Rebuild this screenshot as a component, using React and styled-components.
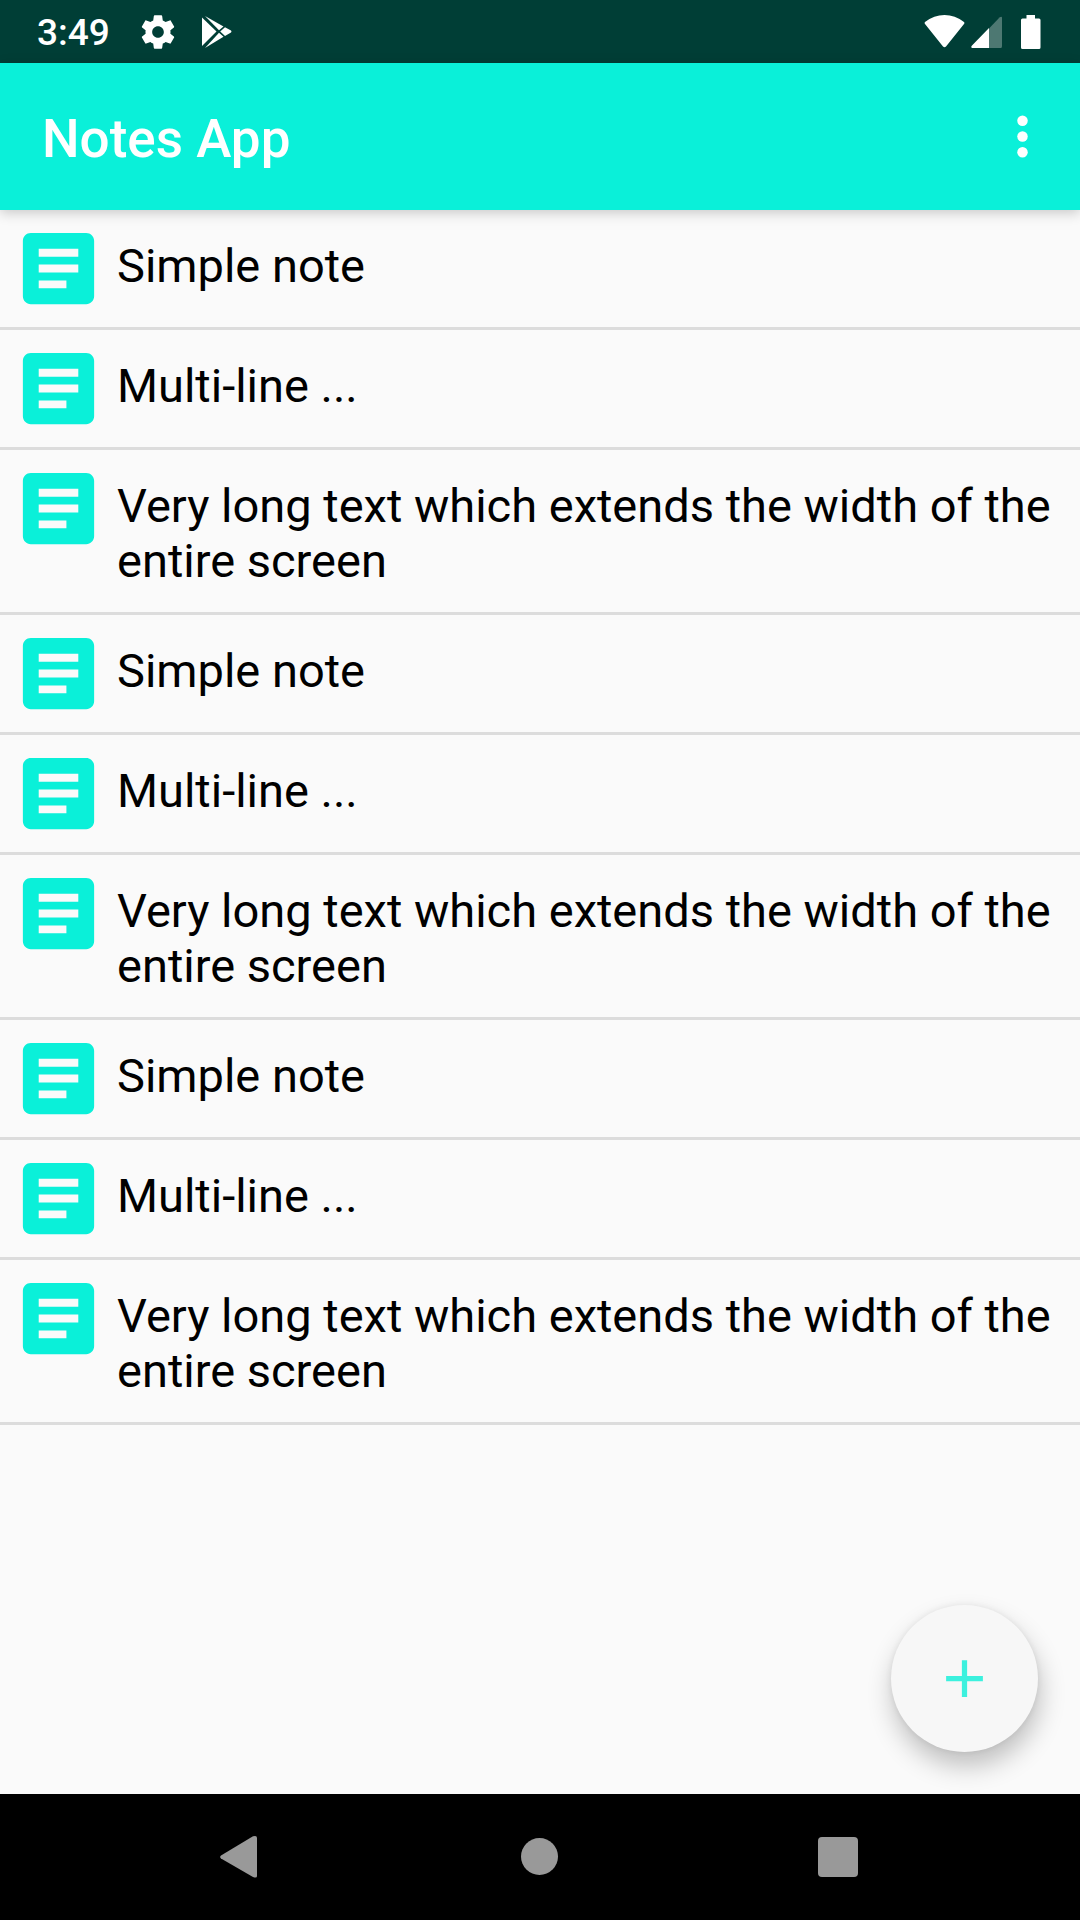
import React from "react";
import styled, { createGlobalStyle } from "styled-components";

const GlobalStyle = createGlobalStyle`
  * { box-sizing: border-box; }
  body {
    margin: 0;
    background: #fafafa;
    font-family: Roboto, "Liberation Sans", sans-serif;
  }
`;

const Screen = styled.div`
  display: flex;
  flex-direction: column;
  min-height: 100vh;
`;

const StatusBar = styled.header`
  display: flex;
  align-items: center;
  justify-content: space-between;
  height: 63px;
  padding: 0 39px 0 37px;
  background: #003e36;
  color: #fff;
`;

const StatusGroup = styled.div`
  display: flex;
  align-items: center;
  gap: ${(p) => p.$gap}px;

  svg { display: block; }
`;

const Clock = styled.time`
  margin-right: 4px;
  padding-top: 2px;
  font-size: 37px;
  font-weight: 500;
  line-height: 43px;
`;

const AppBar = styled.div`
  position: relative;
  display: flex;
  align-items: center;
  justify-content: space-between;
  height: 147px;
  padding: 0 26px 0 42px;
  background: #0af0d9;
  color: #fff;
  box-shadow: 0 3px 12px rgba(0, 0, 0, 0.2);
  z-index: 1;
`;

const Title = styled.h1`
  margin: 0;
  padding-top: 4px;
  font-size: 53px;
  font-weight: 500;
  line-height: 62px;
`;

const IconButton = styled.button`
  display: flex;
  align-items: center;
  justify-content: center;
  padding: 0;
  border: 0;
  background: none;
  color: inherit;
  cursor: pointer;
`;

const Content = styled.main`
  position: relative;
  flex: 1;
`;

const NoteList = styled.ul`
  margin: 0;
  padding: 0;
  list-style: none;
`;

const NoteRow = styled.li`
  display: flex;
  align-items: flex-start;
  gap: 11px;
  padding: 11px;
  border-bottom: 3px solid #dcdcdc;
`;

const NoteIcon = styled.svg`
  flex: none;
  display: block;
  width: 95px;
  height: 95px;
  fill: #0af0d9;
`;

const NoteText = styled.span`
  padding: 17px 0 13px;
  color: #000;
  font-size: 47px;
  line-height: 55px;
`;

const AddButton = styled(IconButton)`
  position: absolute;
  right: 42px;
  bottom: 42px;
  width: 147px;
  height: 147px;
  border-radius: 50%;
  background: #f7f7f7;
  color: #3cf1de;
  box-shadow: 0 0 6px rgba(0, 0, 0, 0.07), 2px 14px 26px rgba(0, 0, 0, 0.24);
`;

const NavBar = styled.nav`
  position: relative;
  display: flex;
  align-items: center;
  justify-content: center;
  height: 126px;
  background: #000;
`;

const NavButton = styled(IconButton)`
  width: 298px;
  height: 126px;
  color: #999;
`;

const notes = Array.from({ length: 3 }).flatMap(() => [
  "Simple note",
  "Multi-line ...",
  "Very long text which extends the width of the entire screen",
]);

const GearIcon = () => (
  <svg width="40" height="40" viewBox="0 0 24 24" fill="currentColor" aria-hidden="true">
    <path d="M19.43 12.98c.04-.32.07-.64.07-.98s-.03-.66-.07-.98l2.11-1.65c.19-.15.24-.42.12-.64l-2-3.46c-.12-.22-.39-.3-.61-.22l-2.49 1c-.52-.4-1.08-.73-1.69-.98l-.38-2.65C14.46 2.18 14.25 2 14 2h-4c-.25 0-.46.18-.49.42l-.38 2.65c-.61.25-1.17.59-1.69.98l-2.49-1c-.23-.09-.49 0-.61.22l-2 3.46c-.13.22-.07.49.12.64l2.11 1.65c-.04.32-.07.65-.07.98s.03.66.07.98l-2.11 1.65c-.19.15-.24.42-.12.64l2 3.46c.12.22.39.3.61.22l2.49-1c.52.4 1.08.73 1.69.98l.38 2.65c.03.24.24.42.49.42h4c.25 0 .46-.18.49-.42l.38-2.65c.61-.25 1.17-.59 1.69-.98l2.49 1c.23.09.49 0 .61-.22l2-3.46c.12-.22.07-.49-.12-.64l-2.11-1.65zM12 15.5c-1.93 0-3.5-1.57-3.5-3.5s1.57-3.5 3.5-3.5 3.5 1.57 3.5 3.5-1.57 3.5-3.5 3.5z" />
  </svg>
);

const PlayIcon = () => (
  <svg width="30" height="34" viewBox="0 0 30 34" fill="currentColor" aria-hidden="true">
    <path d="M0 2.500 14.500 16.500 0 31z" />
    <path d="M3 1 21.500 11.500 17 15.200z" />
    <path d="M3 33 21.500 21.800 17 17.800z" />
    <path d="M23 12.200 29 15.500Q30 16.500 29 17.500L23 21 18.200 16.500z" />
  </svg>
);

const WifiIcon = () => (
  <svg width="41" height="34" viewBox="0 0 41 34" fill="currentColor" aria-hidden="true">
    <path d="M1 7Q0 8 1 9L19 31.500Q20.500 33 22 31.500L40 9Q41 8 40 7Q31 0 20.500 0T1 7Z" />
  </svg>
);

const SignalIcon = () => (
  <svg width="32" height="34" viewBox="0 0 32 34" fill="currentColor" aria-hidden="true">
    <path opacity=".3" d="M18 13.500 28.500 2.500Q31 1 31 3V31Q31 33 30 33H18Z" />
    <path d="M18 13V33H1Q-.5 32 1 30.500Z" />
  </svg>
);

const BatteryIcon = () => (
  <svg width="32" height="34" viewBox="-12 0 32 34" fill="currentColor" aria-hidden="true">
    <path d="M5.500 0H14V3.500H18Q19.500 3.500 19.500 5V32.500Q19.500 34 18 34H1.500Q0 34 0 32.500V5Q0 3.500 1.500 3.500H5.500Z" />
  </svg>
);

export default function App() {
  return (
    <Screen>
      <GlobalStyle />
      <StatusBar>
        <StatusGroup $gap={24}>
          <Clock>3:49</Clock>
          <GearIcon />
          <PlayIcon />
        </StatusGroup>
        <StatusGroup $gap={6}>
          <WifiIcon />
          <SignalIcon />
          <BatteryIcon />
        </StatusGroup>
      </StatusBar>
      <AppBar>
        <Title>Notes App</Title>
        <IconButton type="button" aria-label="More options">
          <svg width="63" height="63" viewBox="0 0 24 24" fill="currentColor">
            <circle cx="12" cy="6" r="2" />
            <circle cx="12" cy="12" r="2" />
            <circle cx="12" cy="18" r="2" />
          </svg>
        </IconButton>
      </AppBar>
      <Content>
        <NoteList>
          {notes.map((note, i) => (
            <NoteRow key={i}>
              <NoteIcon viewBox="0 0 24 24" aria-hidden="true">
                <path d="M19 3H5c-1.100 0-2 .9-2 2v14c0 1.100.9 2 2 2h14c1.100 0 2-.9 2-2V5c0-1.100-.9-2-2-2zm-5 14H7v-2h7v2zm3-4H7v-2h10v2zm0-4H7V7h10v2z" />
              </NoteIcon>
              <NoteText>{note}</NoteText>
            </NoteRow>
          ))}
        </NoteList>
        <AddButton type="button" aria-label="Add note">
          <svg width="63" height="63" viewBox="0 0 24 24" fill="currentColor">
            <path d="M19 13h-6v6h-2v-6H5v-2h6V5h2v6h6v2z" />
          </svg>
        </AddButton>
      </Content>
      <NavBar>
        <NavButton type="button" aria-label="Back">
          <svg width="44" height="44" viewBox="0 0 44 44" fill="currentColor">
            <path d="M1 20.500 33 1.300Q37 0 37 3V41Q37 43.500 33 42L1 23.500Q-.7 22 1 20.500Z" />
          </svg>
        </NavButton>
        <NavButton type="button" aria-label="Home">
          <svg width="38" height="38" viewBox="0 0 38 38" fill="currentColor">
            <circle cx="18.500" cy="18.500" r="18.500" />
          </svg>
        </NavButton>
        <NavButton type="button" aria-label="Recent apps">
          <svg width="40" height="40" viewBox="0 0 40 40" fill="currentColor">
            <rect width="40" height="40" rx="4" />
          </svg>
        </NavButton>
      </NavBar>
    </Screen>
  );
}
